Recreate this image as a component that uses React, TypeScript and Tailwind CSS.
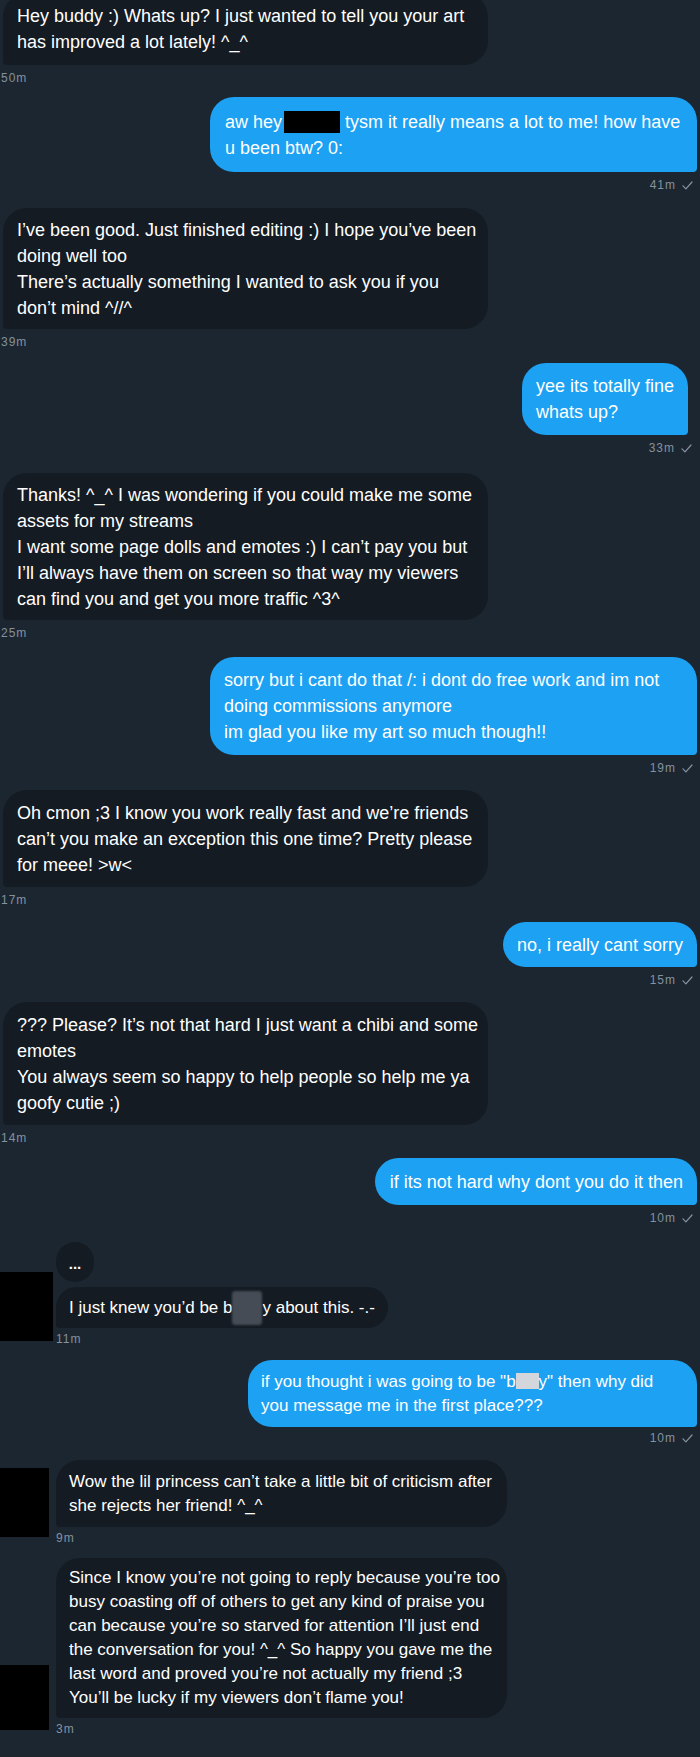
import type { ReactNode } from 'react';

const TOP = 'text-[18px] leading-[26px]';
const BOT = 'text-[17px] leading-[24px]';

const Check = () => (
  <svg width="11" height="9" viewBox="0 0 11 9" fill="none" className="ml-[6px]">
    <path d="M1 4.8L3.9 7.8L10 1" stroke="#8793a0" strokeWidth="1.2" strokeLinecap="round" strokeLinejoin="round" />
  </svg>
);

const Stamp = ({ time, sent, className = '' }: { time: string; sent?: boolean; className?: string }) => (
  <div className={`flex h-[14px] items-center text-[12px] leading-[14px] tracking-[1px] text-[#85919d] ${className}`}>
    {time}
    {sent && <Check />}
  </div>
);

const Lines = ({ lines }: { lines: ReactNode[] }) => (
  <>
    {lines.map((line, i) => (
      <div key={i} className="whitespace-nowrap">
        {line}
      </div>
    ))}
  </>
);

type MsgProps = {
  lines: ReactNode[];
  time: string;
  box: string;
  wrap?: string;
  stamp?: string;
};

const Received = ({ lines, time, box, wrap = '', stamp = 'mt-[6px] pl-[1px]' }: MsgProps) => (
  <div className={`flex flex-col items-start ${wrap}`}>
    <div className={`rounded-[24px] rounded-bl-[4px] bg-[#141b23] text-white ${box}`}>
      <Lines lines={lines} />
    </div>
    <Stamp time={time} className={stamp} />
  </div>
);

const Sent = ({ lines, time, box, wrap = '', stamp = 'mt-[6px] mr-[4px]' }: MsgProps) => (
  <div className={`flex flex-col items-end pr-[3px] ${wrap}`}>
    <div className={`rounded-[24px] rounded-br-[4px] bg-[#1da1f2] text-white ${box}`}>
      <Lines lines={lines} />
    </div>
    <Stamp time={time} sent className={stamp} />
  </div>
);

const Avatar = ({ offset }: { offset: string }) => (
  <div className="w-[56px] shrink-0">
    <div className={`bg-black ${offset}`} />
  </div>
);

export default function App() {
  return (
    <div className="h-[1757px] w-[700px] overflow-hidden bg-[#1b2631] font-['Liberation_Sans',Arial,sans-serif] text-white">
      <Received
        wrap="-mt-[7px] pl-[3px]"
        box={`w-[485px] pl-[14px] pt-[10px] pb-[10px] ${TOP}`}
        stamp="mt-[6px] -ml-[2px]"
        time="50m"
        lines={['Hey buddy :) Whats up? I just wanted to tell you your art', 'has improved a lot lately! ^_^']}
      />
      <Sent
        wrap="mt-[12px]"
        box={`w-[487px] pl-[15px] pt-[12px] pb-[11px] ${TOP}`}
        time="41m"
        lines={[
          <>
            aw hey
            <span className="ml-[2px] inline-block h-[22px] w-[56px] bg-black align-[-5px]" /> tysm it really means a lot to me! how have
          </>,
          'u been btw? 0:',
        ]}
      />
      <Received
        wrap="mt-[16px] pl-[3px]"
        box={`w-[485px] pl-[14px] py-[8.5px] ${TOP}`}
        stamp="mt-[6px] ml-[-2px]"
        time="39m"
        lines={[
          'I’ve been good. Just finished editing :) I hope you’ve been',
          'doing well too',
          'There’s actually something I wanted to ask you if you',
          'don’t mind ^//^',
        ]}
      />
      <Sent
        wrap="mt-[14px] pr-[12px]"
        box={`px-[14px] py-[10px] ${TOP}`}
        stamp="mt-[6px] -mr-[4px]"
        time="33m"
        lines={['yee its totally fine', 'whats up?']}
      />
      <Received
        wrap="mt-[18px] pl-[3px]"
        box={`w-[485px] pl-[14px] py-[8.5px] ${TOP}`}
        stamp="mt-[6px] ml-[-2px]"
        time="25m"
        lines={[
          'Thanks! ^_^ I was wondering if you could make me some',
          'assets for my streams',
          'I want some page dolls and emotes :) I can’t pay you but',
          'I’ll always have them on screen so that way my viewers',
          'can find you and get you more traffic ^3^',
        ]}
      />
      <Sent
        wrap="mt-[17px]"
        box={`w-[487px] pl-[14px] py-[10px] ${TOP}`}
        time="19m"
        lines={[
          'sorry but i cant do that /: i dont do free work and im not',
          'doing commissions anymore',
          'im glad you like my art so much though!!',
        ]}
      />
      <Received
        wrap="mt-[15px] pl-[3px]"
        box={`w-[485px] pl-[14px] py-[9.5px] ${TOP}`}
        stamp="mt-[6px] ml-[-2px]"
        time="17m"
        lines={[
          'Oh cmon ;3 I know you work really fast and we’re friends',
          'can’t you make an exception this one time? Pretty please',
          'for meee! >w<',
        ]}
      />
      <Sent
        wrap="mt-[15px]"
        box={`px-[14px] py-[9.5px] ${TOP}`}
        time="15m"
        lines={['no, i really cant sorry']}
      />
      <Received
        wrap="mt-[15px] pl-[3px]"
        box={`w-[485px] pl-[14px] py-[9.5px] ${TOP}`}
        stamp="mt-[6px] ml-[-2px]"
        time="14m"
        lines={[
          '??? Please? It’s not that hard I just want a chibi and some',
          'emotes',
          'You always seem so happy to help people so help me ya',
          'goofy cutie ;)',
        ]}
      />
      <Sent
        wrap="mt-[13px]"
        box={`pl-[15px] pr-[14px] py-[10.5px] ${TOP}`}
        time="10m"
        lines={['if its not hard why dont you do it then']}
      />

      <div className="mt-[17px] pl-[56px]">
        <div className="flex h-[40px] w-[38px] items-end justify-center rounded-[19px] bg-[#141b23] pb-[11px] text-[15px] font-bold leading-[14px]">
          ...
        </div>
      </div>

      <div className="mt-[5px] flex">
        <Avatar offset="-mt-[15px] h-[69px] w-[53px]" />
        <Received
          box={`px-[13px] py-[8.5px] ${BOT}`}
          stamp="mt-[4px]"
          time="11m"
          lines={[
            <>
              I just knew you’d be b
              <span className="-my-[6px] inline-block h-[34px] w-[30px] rounded-[3px] bg-[#454c55] align-middle blur-[1px]" />
              y about this. -.-
            </>,
          ]}
        />
      </div>

      <Sent
        wrap="mt-[14px]"
        box={`w-[449px] pl-[13px] py-[9.5px] ${BOT}`}
        stamp="mt-[4px] mr-[4px]"
        time="10m"
        lines={[
          <>
            if you thought i was going to be "b
            <span className="inline-block h-[16px] w-[23px] bg-[#d3d7db] align-[-2px]" />
            y" then why did
          </>,
          'you message me in the first place???',
        ]}
      />

      <div className="mt-[15px] flex">
        <Avatar offset="mt-[8px] h-[69px] w-[49px]" />
        <Received
          box={`w-[451px] pl-[13px] py-[9.5px] ${BOT}`}
          stamp="mt-[4px]"
          time="9m"
          lines={['Wow the lil princess can’t take a little bit of criticism after', 'she rejects her friend! ^_^']}
        />
      </div>

      <div className="mt-[13px] flex">
        <Avatar offset="mt-[107px] h-[65px] w-[49px]" />
        <Received
          box={`w-[451px] pl-[13px] py-[8px] ${BOT}`}
          stamp="mt-[4px]"
          time="3m"
          lines={[
            'Since I know you’re not going to reply because you’re too',
            'busy coasting off of others to get any kind of praise you',
            'can because you’re so starved for attention I’ll just end',
            'the conversation for you! ^_^ So happy you gave me the',
            'last word and proved you’re not actually my friend ;3',
            'You’ll be lucky if my viewers don’t flame you!',
          ]}
        />
      </div>
    </div>
  );
}
